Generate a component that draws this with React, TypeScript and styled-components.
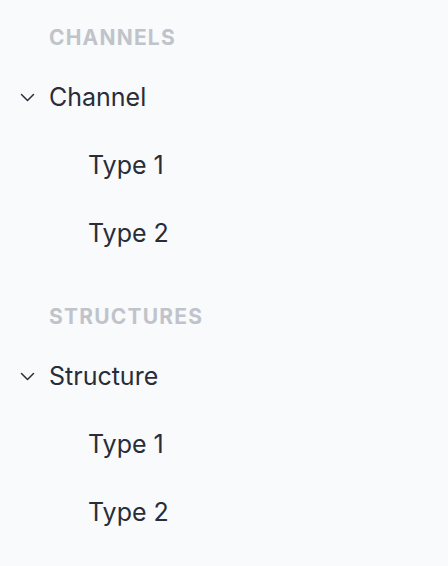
import styled, { createGlobalStyle } from "styled-components";

const GlobalStyle = createGlobalStyle`
  html, body {
    margin: 0;
    padding: 0;
    background: #f9fafc;
  }
  body {
    font-family: Inter, "Noto Sans", sans-serif;
  }
`;

const Sidebar = styled.nav`
  width: 448px;
  min-height: 566px;
  box-sizing: border-box;
  padding: 24px 0 0 0;
  background: #f9fafc;
`;

const Section = styled.section`
  display: flex;
  flex-direction: column;
  margin-bottom: 36px;
`;

const Heading = styled.h3`
  margin: 0;
  padding-left: 49px;
  height: 28px;
  line-height: 28px;
  font-size: 21px;
  font-weight: 700;
  letter-spacing: 1.2px;
  text-transform: uppercase;
  color: #c0c4ca;
`;

const Row = styled.div<{ $indent?: boolean }>`
  display: flex;
  align-items: center;
  height: 68px;
  padding-left: ${(p) => (p.$indent ? "88px" : "19px")};
  font-size: 25px;
  color: #282d38;
  gap: 13px;
`;

const Parent = styled(Row)`
  margin-top: 11px;
`;

const Chevron = () => (
  <svg width="17" height="16" viewBox="0 0 17 16" fill="none">
    <path d="M2.5 5.5l6 6 6-6" stroke="#282d38" strokeWidth="1.5" strokeLinecap="round" strokeLinejoin="round" />
  </svg>
);

const groups = [
  { title: "Channels", name: "Channel", items: ["Type 1", "Type 2"] },
  { title: "Structures", name: "Structure", items: ["Type 1", "Type 2"] },
];

export default function App() {
  return (
    <>
      <GlobalStyle />
      <Sidebar>
        {groups.map((g) => (
          <Section key={g.title}>
            <Heading>{g.title}</Heading>
            <Parent>
              <Chevron />
              {g.name}
            </Parent>
            {g.items.map((it) => (
              <Row key={it} $indent>
                {it}
              </Row>
            ))}
          </Section>
        ))}
      </Sidebar>
    </>
  );
}
